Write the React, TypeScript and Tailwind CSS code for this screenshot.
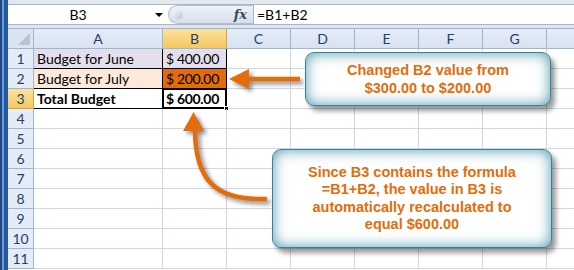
const cols = ["C", "D", "E", "F", "G"];

function HeaderCell({ label, width, selected = false }: { label: string; width: string; selected?: boolean }) {
  return (
    <div
      className={`${width} flex h-full shrink-0 items-center justify-center border-r ${
        selected
          ? "border-[#e2a13c] bg-gradient-to-b from-[#fbe29d] to-[#f5c85f]"
          : "border-[#9eb6ce] bg-gradient-to-b from-[#e4ecf7] to-[#d8e3f1]"
      }`}
    >
      {label}
    </div>
  );
}

function Money({ value }: { value: string }) {
  return (
    <span className="tracking-[-0.3px]">
      $<span className="ml-[3px]">{value}</span>
    </span>
  );
}

function Row({ n, a, b, aClass = "", bClass = "", selected = false }: {
  n: number;
  a?: string;
  b?: string;
  aClass?: string;
  bClass?: string;
  selected?: boolean;
}) {
  return (
    <div className="flex h-[20px]">
      <div
        className={`flex w-[26px] shrink-0 items-center justify-center border-r border-b text-[#24406a] ${
          selected
            ? "border-[#e2a13c] bg-gradient-to-b from-[#fbe29d] to-[#f5c85f]"
            : "border-[#9eb6ce] bg-[#e4ecf7]"
        }`}
      >
        {n}
      </div>
      <div className={`flex w-[129px] shrink-0 items-center border-r border-b pl-[3px] ${aClass || "border-[#d0d7e5]"}`}>
        {a}
      </div>
      <div className={`relative flex w-[64px] shrink-0 items-center justify-end border-r border-b pr-[7px] ${bClass || "border-[#d0d7e5]"}`}>
        {b && <Money value={b} />}
      </div>
      {cols.map((c) => (
        <div key={c} className="w-[64px] shrink-0 border-r border-b border-[#d0d7e5]" />
      ))}
      <div className="flex-1 border-b border-[#d0d7e5]" />
    </div>
  );
}

export default function App() {
  return (
    <div className="relative flex h-[270px] w-[574px] overflow-hidden bg-white font-['Lato',sans-serif] text-[14px] text-black">
      {/* window frame */}
      <div className="flex w-[8px] shrink-0">
        <div className="w-[2px] bg-[#1b4886]" />
        <div className="w-[2px] bg-[#6f97c9]" />
        <div className="w-[4px] bg-[#2458a0]" />
      </div>

      <div className="flex flex-1 flex-col">
        <div className="h-[5px] border-b border-[#a9b6c8] bg-[#e3e8ef]" />

        {/* formula bar */}
        <div className="flex h-[20px] border-b border-[#a9b6c8]">
          <div className="flex w-[160px] shrink-0 items-center bg-white">
            <span className="w-[140px] text-center">B3</span>
            <span className="ml-[7px] h-0 w-0 border-x-[4px] border-t-[4px] border-x-transparent border-t-black" />
          </div>
          <div className="flex w-[85px] shrink-0 items-center rounded-l-full border border-r-0 border-[#b3bfcf] bg-gradient-to-b from-[#eef2f7] to-[#d6dfeb]">
            <span className="ml-[4px] h-[10px] w-[10px] rounded-full bg-gradient-to-br from-[#f4f6f9] to-[#b9c3cf]" />
            <span className="ml-auto mr-[6px] font-['DejaVu_Serif',serif] text-[13px] font-bold italic text-[#36475f]">
              fx
            </span>
          </div>
          <div className="flex flex-1 items-center border-l border-[#a9b6c8] bg-white pl-[3px]">=B1+B2</div>
        </div>

        <div className="h-[4px] border-b border-[#9eb6ce] bg-[#dfe5ee]" />

        {/* column headers */}
        <div className="flex h-[20px] border-b border-[#9eb6ce] text-[#24406a]">
          <div className="relative w-[26px] shrink-0 border-r border-[#9eb6ce] bg-[#dbe5f1]">
            <div className="absolute right-[3px] bottom-[3px] h-0 w-0 border-l-[12px] border-l-transparent [border-bottom:12px_solid_#b8c4d4]" />
          </div>
          <HeaderCell label="A" width="w-[129px]" />
          <HeaderCell label="B" width="w-[64px]" selected />
          {cols.map((c) => (
            <HeaderCell key={c} label={c} width="w-[64px]" />
          ))}
          <div className="flex-1 bg-gradient-to-b from-[#e4ecf7] to-[#d8e3f1]" />
        </div>

        <Row
          n={1}
          a="Budget for June"
          b="400.00"
          aClass="border-black bg-[#e4dfec]"
          bClass="border-black bg-[#e4dfec]"
        />
        <Row
          n={2}
          a="Budget for July"
          b="200.00"
          aClass="border-black bg-[#fde9d9]"
          bClass="border-black bg-[#e26b0a]"
        />
        <div className="relative">
          <Row n={3} a="Total Budget" b="600.00" aClass="border-black font-bold" bClass="border-black font-bold" selected />
          <div className="pointer-events-none absolute top-[-1px] left-[154px] h-[21px] w-[65px] border-2 border-black" />
          <div className="pointer-events-none absolute top-[17px] left-[216px] h-[5px] w-[5px] border border-white bg-black" />
        </div>
        {[4, 5, 6, 7, 8, 9, 10, 11].map((n) => (
          <Row key={n} n={n} />
        ))}
      </div>

      {/* arrows */}
      <svg className="pointer-events-none absolute inset-0" width="574" height="270" viewBox="0 0 574 270">
        <g fill="#e46c0a" stroke="#e46c0a" style={{ filter: "drop-shadow(3px 3px 2px rgba(0,0,0,0.45))" }}>
          <line x1="300" y1="79" x2="246" y2="79" strokeWidth="4.5" />
          <polygon points="229,79 249,69 249,89" stroke="none" />
          <path d="M 267 199 C 215 201 195 180 195 129" fill="none" strokeWidth="4.5" />
          <polygon points="193.5,112 183,131 204,131" stroke="none" />
        </g>
      </svg>

      {/* callouts */}
      <div className="absolute top-[52px] left-[305px] flex h-[54px] w-[246px] flex-col items-center justify-center rounded-[9px] border-[1.5px] border-[#31859c] bg-white font-['Liberation_Sans',Arial,sans-serif] text-[14.5px] leading-[18px] font-bold text-[#e46c0a] shadow-[inset_0_0_14px_rgba(49,133,156,0.85),4px_5px_5px_rgba(0,0,0,0.4)]">
        <span>Changed B2 value from</span>
        <span>$300.00 to $200.00</span>
      </div>
      <div className="absolute top-[149px] left-[272px] flex h-[99px] w-[280px] flex-col items-center justify-center rounded-[9px] border-[1.5px] border-[#31859c] bg-white text-center font-['Liberation_Sans',Arial,sans-serif] text-[14.5px] leading-[17.5px] font-bold text-[#e46c0a] shadow-[inset_0_0_14px_rgba(49,133,156,0.85),4px_5px_5px_rgba(0,0,0,0.4)]">
        <span>Since B3 contains the formula</span>
        <span>=B1+B2, the value in B3 is</span>
        <span>automatically recalculated to</span>
        <span>equal $600.00</span>
      </div>
    </div>
  );
}
